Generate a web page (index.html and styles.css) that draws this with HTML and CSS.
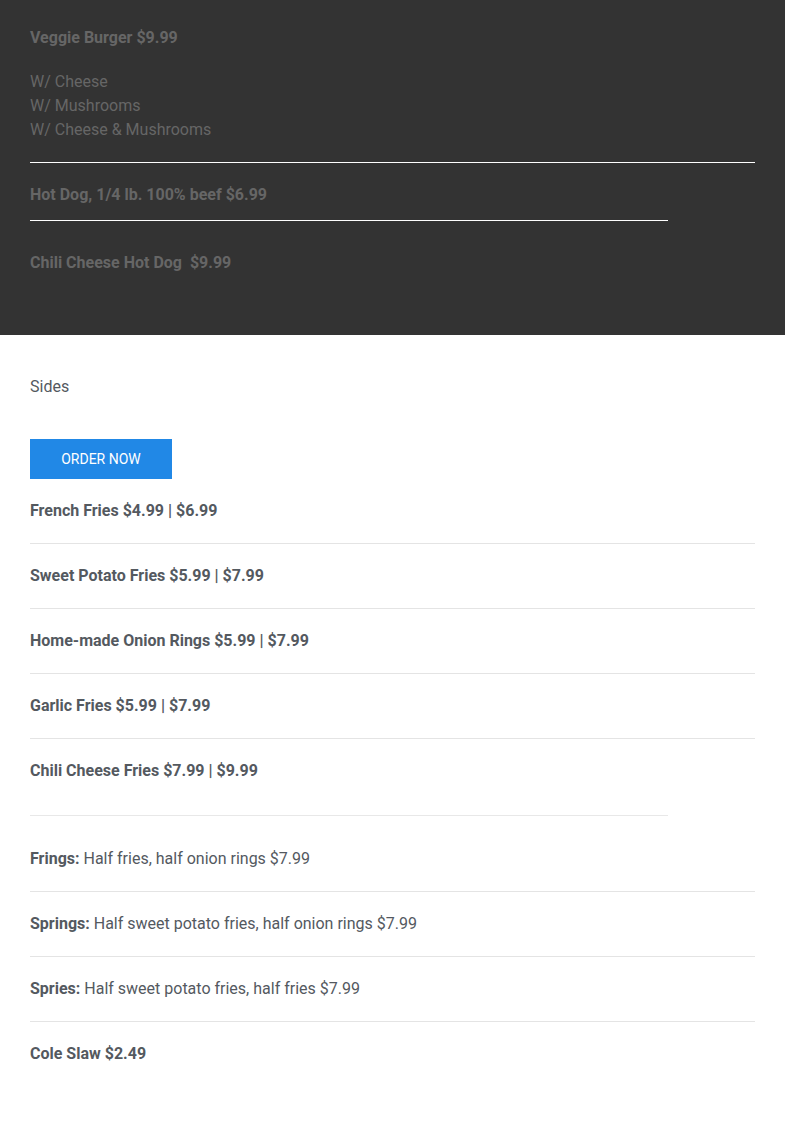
FILE: index.html
```
<!DOCTYPE html>
<html lang="en">
  <head>
    <meta charset="UTF-8" />
    <meta name="viewport" content="width=device-width, initial-scale=1.0" />
    <title>Menu</title>
    <link rel="stylesheet" href="styles.css">
  </head>
  <body>
    <section class="dark">
      <p class="item-title">Veggie Burger $9.99</p>
      <ul class="options">
        <li>W/ Cheese</li>
        <li>W/ Mushrooms</li>
        <li>W/ Cheese &amp; Mushrooms</li>
      </ul>
      <hr class="rule-full" />
      <p class="item-title hotdog">Hot Dog, 1/4 lb. 100% beef $6.99</p>
      <hr class="rule-short" />
      <p class="item-title chili">Chili Cheese Hot Dog&nbsp; $9.99</p>
    </section>

    <section class="sides">
      <h2 class="heading">Sides</h2>
      <a class="order-btn" href="#">Order Now</a>

      <div class="list">
        <div class="row"><strong>French Fries $4.99 | $6.99</strong></div>
        <div class="row"><strong>Sweet Potato Fries $5.99 | $7.99</strong></div>
        <div class="row"><strong>Home-made Onion Rings $5.99 | $7.99</strong></div>
        <div class="row"><strong>Garlic Fries $5.99 | $7.99</strong></div>
        <div class="row last"><strong>Chili Cheese Fries $7.99 | $9.99</strong></div>
      </div>

      <hr class="divider" />

      <div class="list">
        <div class="row"><strong>Frings:</strong> Half fries, half onion rings $7.99</div>
        <div class="row"><strong>Springs:</strong> Half sweet potato fries, half onion rings $7.99</div>
        <div class="row"><strong>Spries:</strong> Half sweet potato fries, half fries $7.99</div>
        <div class="row last"><strong>Cole Slaw $2.49</strong></div>
      </div>
    </section>
  </body>
</html>
```

FILE: styles.css
```
body {
  margin: 0;
  font-family: Roboto, "Liberation Sans", sans-serif;
  font-size: 16px;
  line-height: 24px;
  color: #54595f;
  background-color: #fff;
}
p,
ul {
  margin: 0;
}
.dark {
  background-color: #333;
  color: #666;
  padding: 26px 30px 60px;
}
.item-title {
  font-weight: 700;
}
.options {
  list-style: none;
  padding: 0;
  margin-top: 20px;
}
.rule-full,
.rule-short {
  border: none;
  border-top: 1px solid #fff;
  margin: 0;
}
.rule-full {
  margin-top: 20px;
}
.rule-short {
  width: 638px;
  margin-top: 13px;
}
.hotdog {
  margin-top: 20px;
}
.chili {
  margin-top: 30px;
}
.sides {
  padding: 40px 30px 40px;
}
.heading {
  margin: 0;
  font-size: 16px;
  font-weight: 400;
  line-height: 24px;
}
.order-btn {
  display: block;
  margin-top: 40px;
  width: 142px;
  line-height: 40px;
  text-align: center;
  background-color: #2188e6;
  color: #fff;
  font-size: 14px;
  text-transform: uppercase;
  text-decoration: none;
}
.list {
  display: flex;
  flex-direction: column;
}
.row {
  padding: 20px 0;
  border-bottom: 1px solid #e4e4e4;
}
.row.last {
  border-bottom: none;
}
.divider {
  border: none;
  border-top: 1px solid #e8e8e8;
  width: 638px;
  margin: 12px 0 11px;
}
```
